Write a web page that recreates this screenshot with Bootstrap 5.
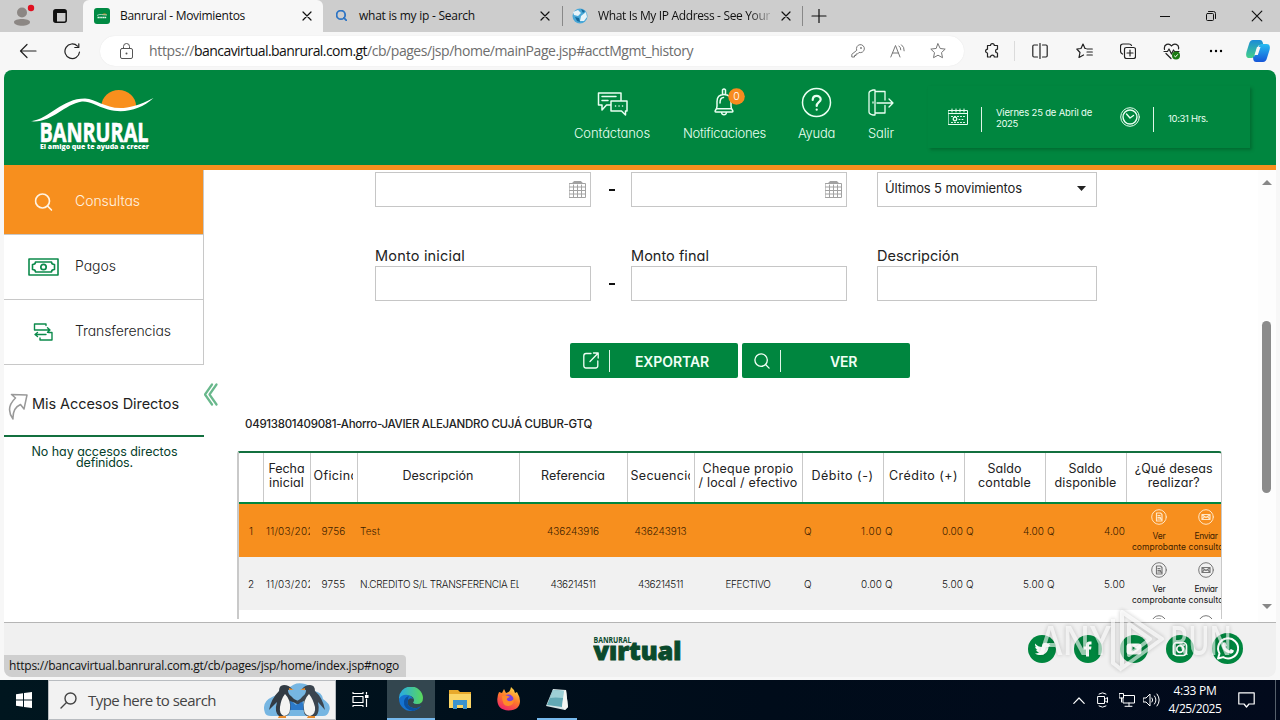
<!DOCTYPE html>
<html lang="es">

<head>
    <meta charset="UTF-8">
    <meta name="viewport" content="width=device-width, initial-scale=1.0">
    <title>Banrural - Movimientos</title>

    <!-- Bootstrap CSS -->
    <link href="https://cdn.jsdelivr.net/npm/bootstrap@5.3.0/dist/css/bootstrap.min.css" rel="stylesheet">

    <style>
        :root {
            --verde: #00863f;
            --verde-linea: #13703f;
            --naranja: #f78f1e;
        }

        body {
            width: 1280px;
            height: 720px;
            overflow: hidden;
            font-family: "Open Sans", "Noto Sans", sans-serif;
            font-size: 12px;
            line-height: 1.2;
            color: #222;
            background: #f7f7f7;
        }

        svg {
            display: block;
            flex: none;
        }

        .ln {
            fill: none;
            stroke: currentColor;
            stroke-linecap: round;
            stroke-linejoin: round;
        }

        [data-w] {
            display: inline-block;
            white-space: nowrap;
        }

        /* Browser window */
        .tab-strip {
            height: 32px;
            background: #cdcdcd;
            color: #111;
        }

        .strip-left {
            width: 83px;
            padding-left: 13px;
            gap: 18px;
        }

        .browser-tab {
            width: 239px;
            padding: 0 7px 0 10px;
        }

        .browser-tab.current {
            width: 240px;
            background: #f7f7f7;
            border-radius: 6px 6px 0 0;
            padding-left: 11px;
        }

        .tab-label {
            margin-left: 10px;
        }

        .tab-sep {
            width: 1px;
            height: 20px;
            background: #888;
        }

        .fade-end {
            -webkit-mask-image: linear-gradient(90deg, #000 88%, transparent 103%);
            mask-image: linear-gradient(90deg, #000 88%, transparent 103%);
        }

        .win-btn {
            width: 46px;
        }

        .toolbar {
            height: 38px;
            color: #222;
        }

        .nav-btns {
            width: 100px;
            padding-left: 19px;
            gap: 23px;
        }

        .url-pill {
            width: 864px;
            height: 30px;
            border-radius: 15px;
            background: #fff;
            padding: 0 6px 0 16px;
            box-shadow: 0 0 1px #ddd;
        }

        .url-text {
            margin-left: 16px;
            font-size: 14px;
            color: #6d6d6d;
        }

        .url-text b {
            font-weight: 400;
            color: #111;
        }

        .pill-ico {
            width: 40px;
            color: #777;
        }

        .bar-ico {
            width: 44px;
        }

        /* Page */
        .site {
            width: 1272px;
            height: 607px;
            margin: 0 4px 3px;
            border-radius: 8px;
            background: #fff;
            overflow: hidden;
            font-family: Inter, "Open Sans", sans-serif;
            font-feature-settings: "cv11";
        }

        .site-header {
            height: 100px;
            background: var(--verde);
            border-bottom: 5px solid var(--naranja);
            color: #e9fff2;
        }

        .brand-logo {
            margin: 16px 0 0 27px;
        }

        .head-item {
            font-size: 13px;
            font-weight: 300;
            padding-top: 16px;
        }

        .head-item svg {
            margin-bottom: 7px;
            overflow: visible;
        }

        .info-box {
            width: 322px;
            height: 62px;
            margin: 16px 26px 0 0;
            padding-left: 20px;
            font-size: 9.5px;
            line-height: 11px;
            box-shadow: 2px 2px 3px rgba(0, 60, 25, .35);
        }

        .v-sep {
            width: 1px;
            height: 25px;
            background: #dff5e8;
        }

        .site-main {
            height: 452px;
            overflow: hidden;
        }

        .side-menu {
            width: 200px;
        }

        .side-link {
            height: 65px;
            border-right: 1px solid #c8c8c8;
            border-bottom: 1px solid #c8c8c8;
            font-size: 14px;
            font-weight: 300;
        }

        .side-link svg {
            margin-left: 24px;
            margin-right: 16px;
        }

        .side-link span {
            margin-top: -2px;
        }

        .side-link.selected {
            background: var(--naranja);
            color: #fff3e3;
        }

        .side-title {
            height: 72px;
            border-bottom: 2px solid var(--verde-linea);
            font-size: 14.5px;
            padding: 8px 0 0 3px;
        }

        .side-note {
            padding: 9px 0 0 1px;
            font-size: 12.5px;
            line-height: 11px;
            color: #06402b;
        }

        .collapse-col {
            width: 33px;
            padding-top: 213px;
            color: #69b88c;
        }

        .work-area {
            width: 985px;
        }

        .filter-grid {
            display: grid;
            grid-template-columns: 216px 40px 216px 30px 220px;
            padding: 2px 0 0 138px;
        }

        .filter-field {
            height: 35px;
            border: 1px solid #c6c6c6;
            padding: 0 8px 0 7px;
        }

        .filter-label {
            height: 59px;
            padding-top: 40px;
            font-size: 14.5px;
        }

        .filter-dash {
            width: 6px;
            height: 2px;
            background: #111;
            margin-left: 2px;
        }

        .action-btn {
            width: 168px;
            height: 35px;
            border-radius: 2px;
            background: var(--verde);
            color: #f1fff6;
            font-size: 14px;
            font-weight: 600;
        }

        .action-btn .v-sep {
            height: 22px;
            margin-left: 10px;
        }

        .action-label {
            padding: 3px 4px 0 0;
        }

        .account-name {
            margin: 40px 0 0 8px;
            height: 33px;
            font-size: 11.5px;
            font-weight: 500;
        }

        .mov-box {
            height: 168px;
            overflow: hidden;
            border-left: 2px solid #c9c9c9;
            border-right: 1px solid #c9c9c9;
            border-top: 2px solid var(--verde-linea);
            border-radius: 3px 3px 0 0;
        }

        .mov-table {
            table-layout: fixed;
            width: 982px;
            font-size: 10px;
            font-weight: 300;
            line-height: 14px;
            color: #111;
        }

        .mov-table th,
        .mov-table td {
            padding: 0;
            overflow: hidden;
            white-space: nowrap;
            vertical-align: middle;
            background: transparent;
            color: inherit;
            box-shadow: none;
        }

        .mov-table th {
            height: 50px;
            font-size: 12.5px;
            font-weight: 400;
            color: #222;
            text-align: center;
            border-right: 1px solid #c9c9c9;
            border-bottom: 2px solid var(--verde);
            padding: 0 4px 3px;
        }

        .mov-table th:last-child {
            border-right: 0;
        }

        .mov-table td {
            height: 53px;
            text-align: center;
        }

        .mov-table .r-sel {
            background: var(--naranja);
            color: #3d1e00;
        }

        .mov-table .r-alt {
            background: #f1f1f1;
        }

        .mov-table .amount {
            padding: 0 1px 0 2px;
        }

        .act-cell {
            width: 110px;
            font-size: 8.5px;
            font-weight: 400;
            line-height: 11px;
            height: 53px;
            padding: 5px 0 0 5px;
        }

        .act-cell svg {
            margin-bottom: 6px;
            color: #777;
        }

        .r-sel .act-cell svg {
            color: #ffe6c5;
        }

        .scroll-col {
            width: 18px;
            margin-left: 36px;
            padding: 10px 1px 13px 0;
            background: #fdfdfd;
        }

        .scroll-up,
        .scroll-down {
            border: 5px solid transparent;
            border-top-width: 0;
            border-bottom: 5px solid #888;
        }

        .scroll-down {
            border-bottom-width: 0;
            border-top: 5px solid #888;
        }

        .scroll-thumb {
            width: 9px;
            height: 172px;
            border-radius: 5px;
            background: #8b8b8b;
            margin-top: 136px;
        }

        .site-footer {
            height: 55px;
            background: #f0f0f0;
            border-top: 1px solid #b5b5b5;
        }

        .socials {
            gap: 18px;
            padding: 10px 33px 0 0;
        }

        /* Overlays on the page */
        .status-tip {
            position: absolute;
            left: 4px;
            bottom: 43px;
            width: 402px;
            height: 22px;
            padding: 4px 0 0 5px;
            background: #cfcfcf;
            border-radius: 0 4px 0 8px;
            color: #111;
        }

        .stamp {
            position: absolute;
            left: 1036px;
            top: 606px;
            filter: drop-shadow(0 0 2px rgba(0, 0, 0, .35));
            opacity: .8;
        }

        /* Windows taskbar */
        .taskbar {
            height: 40px;
            background: linear-gradient(90deg, #00161f, #000c1a 60%, #020a1c);
            color: #fff;
        }

        .start-btn {
            width: 48px;
        }

        .search-box {
            width: 288px;
            background: #f2f2f2;
            border: 1px solid #b8bcc0;
            color: #444;
            font-size: 15px;
            padding-left: 11px;
        }

        .search-box .search-label {
            margin-left: 11px;
            margin-right: 47px;
        }

        .task-btn {
            width: 48px;
            border-bottom: 2px solid transparent;
        }

        .task-btn.active {
            background: #33464f;
            border-color: #76b9ed;
        }

        .running {
            width: 40px;
            height: 2px;
            background: #76b9ed;
            margin: 0 4px -2px;
        }

        .tray-ico {
            width: 24px;
        }

        .tray-clock {
            width: 64px;
            line-height: 18px;
        }
    </style>
</head>

<body class="d-flex flex-column">
    <!-- Shared icons -->
    <svg width="0" height="0" class="position-absolute">
        <symbol id="i-close" viewBox="0 0 10 10">
            <path class="ln" d="M1 1l8 8M9 1L1 9" />
        </symbol>
        <symbol id="i-lupa" viewBox="0 0 18 18">
            <circle class="ln" cx="8" cy="8" r="7" />
            <path class="ln" d="M13 13l4 4" />
        </symbol>
        <symbol id="i-cal" viewBox="0 0 17 17">
            <path class="ln" d="M.5 2.500h16v14H.5zM.5 6h16M.5 9.500h16M.5 13h16M4.500 4v12.500M8.500 4v12.500M12.500 4v12.500M4 1.500h9M5 .5h7" />
        </symbol>
        <symbol id="i-doc" viewBox="0 0 16 16">
            <circle class="ln" cx="8" cy="8" r="7.300" />
            <path class="ln" stroke-width="1.200" d="M5.500 4h4L11 5.500V12H5.500zM7 6.500h2M7 8.300h2.500M7 10h2" />
            <path class="ln" stroke-width="1.400" d="M9.500 9.500l1 1" />
        </symbol>
        <symbol id="i-mail" viewBox="0 0 16 16">
            <circle class="ln" cx="8" cy="8" r="7.300" />
            <path class="ln" stroke-width="1.200" d="M4 5.500h8v5H4zM4 5.700l4 2.800 4-2.800M4 10.300l2.500-2.600M12 10.300L9.500 7.700" />
        </symbol>
    </svg>

    <!-- Tab strip -->
    <div class="tab-strip d-flex align-items-center">
        <div class="strip-left d-flex align-items-center">
            <svg width="22" height="24" viewBox="0 0 22 24">
                <circle cx="9" cy="8.500" r="5" fill="#8c8784" />
                <path d="M1 18c0-4 16-4 16 0 0 5-16 5-16 0z" fill="#8c8784" />
                <circle cx="18" cy="4" r="3.200" fill="#e01020" />
            </svg>
            <svg width="14" height="14" viewBox="0 0 14 14">
                <rect class="ln" x=".8" y=".8" width="12.400" height="12.400" rx="2" stroke-width="1.500" />
                <path d="M1 1h12v3H1zM1 1h3v12H1z" fill="#111" />
            </svg>
        </div>
        <div class="browser-tab current d-flex align-items-center h-100">
            <svg width="16" height="16" viewBox="0 0 16 16">
                <rect width="16" height="16" rx="3" fill="#008a43" />
                <path d="M8 6.500a3 2.500 0 0 1 5 0z" fill="#f78f1e" />
                <path d="M3 7.500c3-2 5-.5 10-.500" stroke="#fff" stroke-width=".6" fill="none" />
                <path d="M3.500 9.500h9" stroke="#dff5e8" stroke-width="1.500" stroke-dasharray="1.500 .3" />
            </svg>
            <span class="tab-label"><span data-w="125">Banrural - Movimientos</span></span>
            <svg class="ms-auto me-1" width="10" height="10" stroke-width="1.200"><use href="#i-close" /></svg>
        </div>
        <div class="browser-tab d-flex align-items-center ps-3" style="padding-right:8px">
            <svg width="11" height="11" viewBox="0 0 18 18" style="color:#2d74c4;margin-left:-3px" stroke-width="3"><use href="#i-lupa" /></svg>
            <span class="tab-label" style="margin-left:12px"><span data-w="116">what is my ip - Search</span></span>
            <svg class="ms-auto me-1" width="10" height="10" stroke-width="1.200"><use href="#i-close" /></svg>
        </div>
        <div class="tab-sep"></div>
        <div class="browser-tab d-flex align-items-center" style="padding-left:9px">
            <svg width="16" height="16" viewBox="0 0 16 16">
                <circle cx="8" cy="8" r="7.500" fill="#4aa8d8" />
                <path d="M1 4l5-2 3 3-3 3-4-1zM9 8l5-4 1 5-3 4-4 0z" fill="#e8f4fa" />
                <path d="M3 9l4 1 1 4-3-1zM9 1l4 2-2 2z" fill="#156a9c" />
            </svg>
            <span class="tab-label fade-end"><span data-w="172">What Is My IP Address - See Your</span></span>
            <svg class="ms-auto me-1" width="10" height="10" stroke-width="1.200"><use href="#i-close" /></svg>
        </div>
        <div class="tab-sep"></div>
        <svg class="me-auto" style="margin-left:7px" width="18" height="14" viewBox="0 0 18 14"><path class="ln" stroke-width="1.200" d="M9 0v14M2 7h14" /></svg>
        <div class="win-btn d-flex justify-content-center"><svg width="10" height="10"><path class="ln" d="M0 5.500h10" /></svg></div>
        <div class="win-btn d-flex justify-content-center">
            <svg width="10" height="10" viewBox="0 0 10 10"><path class="ln" d="M2.500.500h5a2 2 0 0 1 2 2v5M1.500 2.500h5a1 1 0 0 1 1 1v5a1 1 0 0 1-1 1h-5a1 1 0 0 1-1-1v-5a1 1 0 0 1 1-1z" /></svg>
        </div>
        <div class="win-btn d-flex justify-content-center"><svg width="12" height="12"><use href="#i-close" /></svg></div>
    </div>

    <!-- Address bar -->
    <div class="toolbar d-flex align-items-center">
        <div class="nav-btns d-flex align-items-center">
            <svg width="18" height="16" viewBox="0 0 18 16"><path class="ln" stroke-width="1.200" d="M17 8H1.500M8 1.500L1.500 8 8 14.500" /></svg>
            <svg class="ms-1" width="17" height="17" viewBox="0 0 17 17"><path class="ln" stroke-width="1.200" d="M15.500 9a7.300 7.300 0 1 1-2-5.800M14.800.800v3.700h-4" /></svg>
        </div>
        <div class="url-pill d-flex align-items-center">
            <svg class="ms-1" width="13" height="16" viewBox="0 0 13 16" style="color:#555"><path class="ln" d="M2 5.500h9q1.500 0 1.500 1.500v7q0 1.500-1.500 1.500H2Q.5 15.500.5 14V7Q.5 5.500 2 5.500zM3.500 5.500V3.500a3 3 0 0 1 6 0v2" /><circle cx="6.500" cy="10.500" r="1" fill="#555" /></svg>
            <span class="url-text d-flex me-auto"><span data-w="45">https://</span><b data-w="173">bancavirtual.banrural.com.gt</b><span data-w="326">/cb/pages/jsp/home/mainPage.jsp#acctMgmt_history</span></span>
            <div class="pill-ico d-flex justify-content-center">
                <svg width="14" height="14" viewBox="0 0 14 14"><path class="ln" d="M5.600 6A4 4 0 1 1 8 8.400L6.500 10H5v1.500H3.500V13H.8v-2.300z" /><circle cx="10" cy="4" r=".9" fill="currentColor" /></svg>
            </div>
            <div class="pill-ico d-flex justify-content-center">
                <svg width="16" height="14" viewBox="0 0 16 14"><path class="ln" d="M.8 13L5.500 1.500 10 13M2.500 9h6M9 2q2 1.500 1.800 3.800M11.500.800q3 2.200 2.700 6" /></svg>
            </div>
            <div class="pill-ico d-flex justify-content-center">
                <svg width="16" height="16" viewBox="0 0 16 16"><path class="ln" d="M8 .8l2.200 4.700 5 .6-3.700 3.500 1 5.100L8 12.200l-4.500 2.500 1-5.100L.8 6.100l5-.6z" /></svg>
            </div>
        </div>
        <div class="bar-ico d-flex justify-content-center" style="margin-left:6px">
            <svg width="16" height="16" viewBox="0 0 16 16"><path class="ln" stroke-width="1.200" d="M3.500 2.500h3a1.900 1.900 0 0 1 3.800 0h3.200v3.700a1.900 1.900 0 0 0 0 3.800v4h-3.200a1.900 1.900 0 0 0-3.800 0h-3v-4a1.900 1.900 0 1 1 0-3.800z" /></svg>
        </div>
        <div class="tab-sep opacity-25"></div>
        <div class="bar-ico d-flex justify-content-center" style="margin-left:3px">
            <svg width="16" height="16" viewBox="0 0 16 16"><path class="ln" stroke-width="1.200" d="M5.500 2H2q-1.200 0-1.200 1.200v9.600Q.8 14 2 14h3.500M10.500 2H14q1.200 0 1.200 1.200v9.600Q15.200 14 14 14h-3.500M8 .5v15" /></svg>
        </div>
        <div class="bar-ico d-flex justify-content-center">
            <svg width="17" height="16" viewBox="0 0 17 16"><path class="ln" stroke-width="1.200" d="M10 5.500H9L7 1 5 5.500.8 6l3.200 3.500-1 5L7.500 12M11 6h5.300M11 9h5.300M11 12h5.300" /></svg>
        </div>
        <div class="bar-ico d-flex justify-content-center">
            <svg width="16" height="16" viewBox="0 0 16 16"><path class="ln" stroke-width="1.200" d="M6.500 4.500h7q2 0 2 2v7q0 2-2 2h-7q-2 0-2-2v-7q0-2 2-2zM10 7v6M7 10h6M2.500 11Q.5 10 .5 8V3.500Q.500 1 3 1h6q2 0 2.500 1.500" /></svg>
        </div>
        <div class="bar-ico d-flex justify-content-center">
            <svg width="18" height="17" viewBox="0 0 18 17"><path class="ln" stroke-width="1.200" d="M1.500 6.500C.5 1 6-.5 8.500 3c2.500-3.500 8-2 7 3M1 8.500h3.500L6 6l2.500 5L10.500 7l1 1.500H16M3 10.500l5 5" /><circle cx="13" cy="12.500" r="4" fill="#1a7a12" /><path d="M11.200 12.700l1.300 1.200 2.300-2.600" stroke="#fff" fill="none" /></svg>
        </div>
        <div class="bar-ico d-flex justify-content-center">
            <svg width="14" height="4" viewBox="0 0 14 4"><circle cx="2" cy="2" r="1.200" /><circle cx="7" cy="2" r="1.200" /><circle cx="12" cy="2" r="1.200" /></svg>
        </div>
        <svg width="24" height="22" viewBox="0 0 24 22" style="margin-left:8px">
            <defs>
                <linearGradient id="cop1" x2="0" y2="1"><stop stop-color="#1b8bd8" /><stop offset="1" stop-color="#43d08a" /></linearGradient>
                <linearGradient id="cop2" x2="0" y2="1"><stop stop-color="#28bdf2" /><stop offset="1" stop-color="#1656d8" /></linearGradient>
            </defs>
            <path d="M7 0h7q2 0 2.600 2l.8 3H14q-2 0-2.700 2.500L9 15q-.8 3-3.500 3H3.500Q-1 18 .5 12L3 4q1-4 4-4z" fill="url(#cop1)" />
            <path d="M17 22h-7q-2 0-2.600-2L7 17q2-.500 3-3.500L12.500 7Q13.300 4 16 4h4.500Q25 4 23.500 10L21 18q-1 4-4 4z" fill="url(#cop2)" />
            <path d="M11 7h3.500l-2.700 8H8.500z" fill="#f7f7f7" />
        </svg>
    </div>

    <!-- Bank site -->
    <div class="site d-flex flex-column">
        <header class="site-header d-flex align-items-start">
            <svg class="brand-logo" width="124" height="66" viewBox="31 86 124 66">
                <path d="M101.500 106a17.200 16 0 1 1 34.500 0q-16 6-34.500 0z" fill="#f98f1d" />
                <path d="M31 121.300C50 118.500 62 98.500 85 98.500c17 .5 27 21.500 68.500-.5C141 109.500 124 114 108 109.500 95 105.500 90 101 82 101.500 63 104.500 53 123 31 121.300z" fill="#fff" />
                <text x="39.500" y="141.500" font-family="Open Sans" font-weight="700" font-size="26" textLength="109" lengthAdjust="spacingAndGlyphs" fill="#fff" stroke="#fff" stroke-width=".6">BANRURAL</text>
                <text x="40" y="149" font-family="Open Sans" font-weight="800" font-size="7" textLength="109" lengthAdjust="spacingAndGlyphs" fill="#fff">El amigo que te ayuda a crecer</text>
            </svg>
            <nav class="d-flex ms-auto">
                <div class="head-item d-flex flex-column align-items-center">
                    <svg width="32" height="33" viewBox="-1 0 32 33"><path class="ln" stroke-width="1.500" d="M13 19h-3.500L5 24v-5H1.500V7H24v7M14 15h16v10h-1.500v4l-4-4H14zM5 10.500h14M5 14.500h6M18.500 20h.100M22 20h.100M25.500 20h.100" /></svg>
                    <span data-w="76">Contáctanos</span>
                </div>
                <div class="head-item d-flex flex-column align-items-center" style="margin-left:33px">
                    <svg width="32" height="33" viewBox="0 0 32 33"><path class="ln" stroke-width="1.500" d="M7 26q-1.500 0-.5-1.800 1.500-1.800 1.500-4.200v-4.500c0-5 2.500-7 7-7s7 2 7 7v4.500q0 2.400 1.500 4.200 1 1.800-.5 1.800zM13.500 8V4q1.500-2 3 0v4M12.500 26.500c.5 3 4.500 3 5 0M8 22.800h14M11 17c0-4 1-5.500 3.500-5.500" /><circle cx="27.500" cy="10.500" r="8.300" fill="#f78b1f" /><text x="27.500" y="14.300" text-anchor="middle" font-size="10.500" fill="#fff">0</text></svg>
                    <span data-w="83">Notificaciones</span>
                </div>
                <div class="head-item d-flex flex-column align-items-center" style="margin-left:32px">
                    <svg width="32" height="33" viewBox="0 0 32 33"><circle class="ln" cx="15.500" cy="16.500" r="14" stroke-width="1.500" /><path class="ln" stroke-width="2.200" d="M11.700 14c0-5.500 8-5 8-.8 0 3-4 3-4 6.800M15.700 23.500v.200" /></svg>
                    <span data-w="37">Ayuda</span>
                </div>
                <div class="head-item d-flex flex-column align-items-center" style="margin-left:30px">
                    <svg width="32" height="33" viewBox="0 0 32 33"><path class="ln" stroke-width="1.300" d="M4 7q0-2 4-3h2v25H8q-4-1-4-3zM10.500 5.500H20v8.500M20 19.500V27h-9.500M8 16v1M12 17h16M24 13l4 4-4 4" /></svg>
                    <span data-w="26">Salir</span>
                </div>
            </nav>
            <div class="info-box d-flex align-items-center" style="margin-left:31px">
                <svg width="20" height="18" viewBox="0 0 20 18" style="margin-top:-1px"><path class="ln" d="M.5 2.500h19v14H.5zM.5 5.500h19M4 1v3M8 1v3M12 1v3M16 1v3" /><path class="ln" stroke-dasharray="1 2" d="M3.500 8.500h13M11 11.500h6M3.500 14.500h13" /><circle class="ln" cx="7" cy="11" r="1.800" stroke-width="1.300" /></svg>
                <div class="v-sep" style="margin:4px 14px 0 13px"></div>
                <div style="width:124px;margin-top:2px"><span data-w="96">Viernes 25 de Abril de</span><br><span data-w="22">2025</span></div>
                <svg width="20" height="20" viewBox="0 0 20 20" style="margin-top:-1px"><circle class="ln" cx="10" cy="10" r="9.300" /><circle class="ln" cx="10" cy="10" r="7" stroke-width="1.400" /><path class="ln" stroke-width="1.400" d="M6.500 7L10 11l3.500-2.500" /></svg>
                <div class="v-sep" style="margin:4px 14px 0 13px"></div>
                <span data-w="40" style="margin-top:3px">10:31 Hrs.</span>
            </div>
        </header>

        <main class="site-main d-flex">
            <aside class="side-menu">
                <div class="side-link selected d-flex align-items-center">
                    <svg width="31" height="18" viewBox="-6.500 0 31 18" stroke-width="1.700"><use href="#i-lupa" width="18" height="18" /></svg>
                    <span data-w="65">Consultas</span>
                </div>
                <div class="side-link d-flex align-items-center">
                    <svg width="31" height="18" viewBox="0 0 31 18" style="color:#0c8a4b"><path class="ln" stroke-width="1.600" d="M1 1h29v16H1zM7.500 4h16q0 2.500 3 2.500v5q-3 0-3 2.500h-16q0-2.500-3-2.500v-5q3 0 3-2.500z" /><circle class="ln" cx="15.500" cy="9" r="2.700" stroke-width="1.700" /></svg>
                    <span data-w="41">Pagos</span>
                </div>
                <div class="side-link d-flex align-items-center">
                    <svg width="31" height="18" viewBox="0 0 31 18" style="color:#0c8a4b"><path class="ln" stroke-width="1.400" d="M18 2.500V1H6.500v6H22M19.500 4.800L22 7l-2.500 2.200M20.500 9.500h3.500V17H12v-2M18 11.500H7M9.500 9.500L7 11.500l2.500 2" /></svg>
                    <span data-w="96">Transferencias</span>
                </div>
                <div class="side-title d-flex align-items-center">
                    <svg width="22" height="28" viewBox="0 0 22 28" style="color:#999;margin-top:5px"><path class="ln" stroke-width="1.500" d="M4.500 1.500l15.500.500-3 14-3.500-4.500Q5.500 15 6 26-2 15 8.500 5z" /></svg>
                    <span class="ms-auto" style="margin-right:25px"><span data-w="147">Mis Accesos Directos</span></span>
                </div>
                <div class="side-note text-center"><span data-w="146">No hay accesos directos</span><br><span data-w="57">definidos.</span></div>
            </aside>

            <div class="collapse-col">
                <svg width="15" height="23" viewBox="1 0 15 23"><path class="ln" stroke-width="2.200" d="M9 1.500L2 11.500l7 10M13.500 1.500L6.500 11.500l7 10" /></svg>
            </div>

            <section class="work-area">
                <div class="filter-grid">
                    <div class="filter-field d-flex align-items-center justify-content-end pe-1"><svg width="17" height="17" style="color:#a2a2a2"><use href="#i-cal" /></svg></div>
                    <div class="d-flex align-items-center justify-content-center"><div class="filter-dash"></div></div>
                    <div class="filter-field d-flex align-items-center justify-content-end pe-1"><svg width="17" height="17" style="color:#a2a2a2"><use href="#i-cal" /></svg></div>
                    <div></div>
                    <div class="filter-field d-flex align-items-center justify-content-between" style="font-size:13px;padding-right:10px">
                        <span data-w="137" style="margin-top:-2px">Últimos 5 movimientos</span>
                        <svg width="9" height="5" style="margin-top:-2px"><path d="M0 0h9L4.500 5z" fill="#222" /></svg>
                    </div>
                    <div class="filter-label"><span data-w="90">Monto inicial</span></div>
                    <div></div>
                    <div class="filter-label"><span data-w="78">Monto final</span></div>
                    <div></div>
                    <div class="filter-label"><span data-w="82">Descripción</span></div>
                    <div class="filter-field"></div>
                    <div class="d-flex align-items-center justify-content-center"><div class="filter-dash"></div></div>
                    <div class="filter-field"></div>
                    <div></div>
                    <div class="filter-field"></div>
                </div>

                <div class="d-flex gap-1" style="margin:42px 0 0 333px">
                    <div class="action-btn d-flex align-items-center">
                        <svg style="margin-left:13px" width="16" height="17" viewBox="0 0 16 17"><path class="ln" stroke-width="1.300" d="M8 1.500H3Q.8 1.500.8 4v9.500Q.8 16 3 16h9.500q2.300 0 2.300-2.500V9M10.500 1h4.700v5M15 1.200L7 9.500" /></svg>
                        <div class="v-sep"></div>
                        <div class="action-label flex-fill text-center"><span data-w="74">EXPORTAR</span></div>
                    </div>
                    <div class="action-btn d-flex align-items-center">
                        <svg style="margin-left:12px" width="16" height="16" stroke-width="1.500"><use href="#i-lupa" /></svg>
                        <div class="v-sep"></div>
                        <div class="action-label flex-fill text-center"><span data-w="27">VER</span></div>
                    </div>
                </div>

                <div class="account-name"><span data-w="347">04913801409081-Ahorro-JAVIER ALEJANDRO CUJÁ CUBUR-GTQ</span></div>

                <div class="mov-box">
                    <table class="mov-table">
                        <colgroup>
                            <col style="width:24px"><col style="width:47px"><col style="width:47px"><col style="width:162px">
                            <col style="width:108px"><col style="width:67px"><col style="width:108px"><col style="width:81px">
                            <col style="width:81px"><col style="width:81px"><col style="width:81px"><col style="width:95px">
                        </colgroup>
                        <thead>
                            <tr>
                                <th></th>
                                <th><span data-w="36">Fecha</span><br><span data-w="35">inicial</span></th>
                                <th class="text-start ps-0"><div class="overflow-hidden" style="width:42px;padding-left:3px"><span data-w="45">Oficina</span></div></th>
                                <th><span data-w="71">Descripción</span></th>
                                <th><span data-w="64">Referencia</span></th>
                                <th class="text-start ps-0"><div class="overflow-hidden" style="width:62px;padding-left:3px"><span data-w="65">Secuencia</span></div></th>
                                <th class="px-0"><span data-w="91">Cheque propio</span><br><span data-w="99">/ local / efectivo</span></th>
                                <th><span data-w="62">Débito (-)</span></th>
                                <th><span data-w="69">Crédito (+)</span></th>
                                <th><span data-w="34">Saldo</span><br><span data-w="53">contable</span></th>
                                <th><span data-w="34">Saldo</span><br><span data-w="62">disponible</span></th>
                                <th><span data-w="78">¿Qué deseas</span><br><span data-w="52">realizar?</span></th>
                            </tr>
                        </thead>
                        <tbody id="movs"></tbody>
                    </table>
                </div>
            </section>

            <div class="scroll-col d-flex flex-column align-items-center">
                <div class="scroll-up"></div>
                <div class="scroll-thumb"></div>
                <div class="scroll-down mt-auto"></div>
            </div>
        </main>

        <footer class="site-footer d-flex align-items-start">
            <svg width="90" height="28" viewBox="593 635 90 28" style="margin:12px 0 0 589px">
                <text x="593.500" y="643" font-family="Open Sans" font-weight="700" font-size="8" textLength="38" lengthAdjust="spacingAndGlyphs" fill="#0a4a2c">BANRURAL</text>
                <text x="593.500" y="659.500" font-family="Open Sans" font-weight="800" font-size="24" textLength="88" lengthAdjust="spacingAndGlyphs" fill="#0a4a2c" stroke="#0a4a2c" stroke-width=".9">vırtual</text>
            </svg>
            <div class="socials d-flex ms-auto align-items-center">
                <svg width="28" height="28" viewBox="0 0 28 28"><circle cx="14" cy="14" r="14" fill="#00863f" /><path d="M7 8.500q3 3.500 7 3.500 0-4.500 4-4.200l2 1 2-.8-1 2 1.500 0-2 2c0 6-7 10.500-13.500 6.500q2.500 0 4-1.300-2.500-.500-3-2.500h1.500Q7 13.500 7 11.500l1.500.500Q6.500 10.500 7 8.500z" fill="#fff" /></svg>
                <svg width="28" height="28" viewBox="0 0 28 28"><circle cx="14" cy="14" r="14" fill="#00863f" /><path d="M12 21.500v-7H9.500v-3H12V10q0-3.500 3.500-3.500h2v3H16q-1 0-1 1v1h2.500l-.500 3h-2v7z" fill="#fff" /></svg>
                <svg width="28" height="28" viewBox="0 0 28 28"><circle cx="14" cy="14" r="14" fill="#00863f" /><rect x="6.500" y="8.500" width="15" height="11" rx="3" fill="#fff" /><path d="M12.500 11.500l4.500 2.500-4.500 2.500z" fill="#00863f" /></svg>
                <svg width="28" height="28" viewBox="0 0 28 28" style="color:#fff"><circle cx="14" cy="14" r="14" fill="#00863f" /><rect class="ln" x="7.500" y="7.500" width="13" height="13" rx="3.500" stroke-width="1.700" /><circle class="ln" cx="14" cy="14" r="3.300" stroke-width="1.700" /><circle cx="18" cy="10" r="1" fill="#fff" /></svg>
                <svg width="31" height="31" viewBox="0 0 31 31" style="color:#fff"><circle cx="15.500" cy="15.500" r="15.500" fill="#00863f" /><path class="ln" stroke-width="2" d="M6 25.500l1.500-5a10 10 0 1 1 3.700 3.600z" /><path d="M11.500 9.500l1.800-.2 1.500 3.200-1.200 1.500q1.400 2.600 3.800 3.600l1.500-1.500 3 1.500q-.5 3.500-3.800 3-7-1.600-8.100-7.600 0-2.300 1.500-3.500z" fill="#fff" /></svg>
            </div>
        </footer>
    </div>

    <!-- Taskbar -->
    <div class="taskbar d-flex align-items-stretch">
        <div class="start-btn d-flex align-items-center justify-content-center">
            <svg width="16" height="16" viewBox="0 0 16 16"><path d="M0 2.300L7 1.300V7.500H0zM8 1.100L16 0v7.500H8zM0 8.500h7v6.200l-7-1zM8 8.500h8V16l-8-1.100z" fill="#fff" /></svg>
        </div>
        <div class="search-box d-flex align-items-center">
            <svg width="17" height="17" viewBox="0 0 17 17"><path class="ln" stroke-width="1.400" d="M6.500 10.500L1 16" /><circle class="ln" cx="10.500" cy="6.500" r="5.500" stroke-width="1.400" /></svg>
            <span class="search-label"><span data-w="128">Type here to search</span></span>
            <svg width="68" height="37" viewBox="0 0 68 37">
                <path d="M2 31Q-2 20 9 15q6-3 16-8Q32-1 42 2q7 2 9 7 8 1 9 8 9 6 6 12-1 5-6 5H8q-5 0-6-3z" fill="#76b6e2" />
                <path d="M26 17l7 6 6-6 2 11H26z" fill="#2c79c9" />
                <path d="M16 9Q16 3 21 3q5 0 8 4l-4 1q0 4 3 6 3 4 7 5l2 2-2 1-8-3q2 15-5 15h-6q-5-4-2-14l-8 8Q8 17 16 9z" fill="#323b44" />
                <path d="M22 12q6 6 5 15 0 6-6 7-5-2-4-9 1-8 5-13z" fill="#f4f4f2" />
                <path d="M52 9Q52 3 47 3q-5 0-8 4l4 1q0 4-3 6-3 4-6 5l-2 2 2 1 7-3q-2 15 4 15h8q4-4 2-14l7 8q-2-12-10-19z" fill="#3b454f" />
                <path d="M46 12q-6 6-5 15 0 6 6 7 6-2 5-9-2-8-6-13z" fill="#f4f4f2" />
                <path d="M26 6l5 1.500-5 .8zM42 6l-5 1.500 5 .8zM16 34h7v2h-8zM45 34h7v2h-8z" fill="#e88a2a" />
            </svg>
        </div>
        <div class="task-btn d-flex align-items-center justify-content-center" style="width:51px;padding-right:3px">
            <svg width="17" height="15" viewBox="0 0 17 15"><path class="ln" stroke-width="1.200" d="M1 1V.5M11 1V.5M1 14v.500M11 14v.500M1 1.500h10M1 13.500h10M1 4.500h10v6H1zM14.500 0v2M14.500 7v8" /><rect x="13" y="3" width="3.500" height="3" fill="#fff" /></svg>
        </div>
        <div class="task-btn active d-flex align-items-center justify-content-center">
            <svg width="24" height="24" viewBox="0 0 24 24">
                <defs>
                    <linearGradient id="edg" x1="0" x2="1"><stop stop-color="#26a9e8" /><stop offset="1" stop-color="#5ad95a" /></linearGradient>
                </defs>
                <path d="M0 12A12 12 0 0 1 24 11q0 6-6 6-3 0-4-1.500 2-2 0-5Q10 6 0 12z" fill="url(#edg)" />
                <path d="M0 12Q3 7 9 8q4 1 5 4-3-2-5 1-2 6 5 8 4 1 8-2-4 5-10 5A12 12 0 0 1 0 12z" fill="#1573d0" />
                <path d="M9 13q-2 6 5 8 4 1 8-2-3 4-8 5Q4 22 5 14q1-4 5-5-1 1-1 4z" fill="#0b509e" />
            </svg>
        </div>
        <div class="task-btn d-flex align-items-center justify-content-center" style="width:49px">
            <svg width="22" height="19" viewBox="0 0 22 19"><path d="M0 0h9l2 2h11v16H0z" fill="#e8a92c" /><path d="M0 4h22v14H0z" fill="#fbd566" /><path d="M4 10h14v9h-4v-4H8v4H4z" fill="#3c93cf" /></svg>
        </div>
        <div class="task-btn d-flex align-items-center justify-content-center" style="width:49px">
            <svg width="23" height="24" viewBox="0 0 23 24">
                <defs>
                    <linearGradient id="ffx" x1=".8" y1="0" x2=".3" y2="1"><stop stop-color="#ffe04a" /><stop offset=".5" stop-color="#ff7a2a" /><stop offset="1" stop-color="#f0256a" /></linearGradient>
                </defs>
                <path d="M2 5l3 1 2-4 2 4q4 0 5-6 3 2 4 6l2-1q3 5 3 9 0 9-11.500 9.500Q0 23 .3 12 .5 8 2 5z" fill="url(#ffx)" />
                <circle cx="11.500" cy="12.500" r="5" fill="#7a3fe0" />
                <path d="M5 9q4-2 8 1-4 1-3 3 3 3 7-1 0 7-6 7T5 9z" fill="#ff8a2a" />
            </svg>
        </div>
        <div class="task-btn d-flex flex-column align-items-center">
            <svg class="my-auto" width="24" height="23" viewBox="0 0 24 23"><path d="M8 1l13 1 2 17-3 3L1 18z" fill="#d7e6e8" /><path d="M8 2l11 1-2 16-15-2z" fill="#62a9b5" /><path d="M8 2l11 1-1 7Q10 9 5 10z" fill="#9ed0d6" /><path d="M19 3l2-1 2 17-3 3-3-3z" fill="#f4f6f2" /></svg>
            <div class="running"></div>
        </div>

        <div class="ms-auto d-flex align-items-center">
            <div class="tray-ico d-flex justify-content-center"><svg width="12" height="7" viewBox="0 0 12 7"><path class="ln" stroke-width="1.200" d="M.8 6.300L6 1l5.200 5.300" /></svg></div>
            <div class="tray-ico d-flex justify-content-center"><svg width="12" height="16" viewBox="0 0 12 16"><path class="ln" d="M1 4.500h6.500v7H1zM7.500 7.500l3-2v5l-3-2M2 2q3.500-2.500 7 0M2 14q3.500 2.500 7 0" /></svg></div>
            <div class="tray-ico d-flex justify-content-center"><svg width="16" height="14" viewBox="0 0 16 14"><path class="ln" d="M5 2.500h10.500v7.500H4V5.500M10 10v3M6 13.300h7M.5.500h4V5h-4zM2.500 5v4" /></svg></div>
            <div class="tray-ico d-flex justify-content-center"><svg width="17" height="14" viewBox="0 0 17 14"><path class="ln" d="M.5 5h2.500l4-4v12L3 9H.5zM9 5q1.500 2 0 4M11.500 3q3 4 0 8M14 1q4.500 6 0 12" /></svg></div>
            <div class="tray-clock text-center"><span data-w="43">4:33 PM</span><br><span data-w="53">4/25/2025</span></div>
            <svg style="margin:0 20px 0 11px" width="17" height="16" viewBox="0 0 17 16"><path class="ln" stroke-width="1.200" d="M.8.800h15.400v11.200H11L8.500 15 6 12H.8z" /></svg>
            <div style="width:1px;height:40px;background:#56606b;margin-right:4px"></div>
        </div>
    </div>

    <div class="status-tip"><span data-w="390">https://bancavirtual.banrural.com.gt/cb/pages/jsp/home/index.jsp#nogo</span></div>

    <svg class="stamp" width="200" height="70" viewBox="1036 606 200 70">
        <text x="1039" y="655" font-family="Open Sans" font-weight="600" font-size="40" textLength="72" lengthAdjust="spacingAndGlyphs" fill="#fff" fill-opacity=".75">ANY</text>
        <text x="1170" y="655" font-family="Open Sans" font-weight="600" font-size="40" textLength="62" lengthAdjust="spacingAndGlyphs" fill="#fff" fill-opacity=".75">RUN</text>
        <path d="M1122 612v56l40-29zM1129 624l21 15-21 16zM1113 619v44l9 7" fill="none" stroke="#fff" stroke-opacity=".75" stroke-width="4" stroke-linejoin="round" />
    </svg>

    <script src="https://cdn.jsdelivr.net/npm/bootstrap@5.3.0/dist/js/bootstrap.bundle.min.js"></script>
    <script>
        const movs = [
            { n: 1, of: '9756', desc: 'Test', dw: 20, ref: '436243916', rw: 52, sec: '436243913', cheque: '', deb: '1.00', cred: '0.00', cont: '4.00', disp: '4.00', cls: 'r-sel' },
            { n: 2, of: '9755', desc: 'N.CREDITO S/L TRANSFERENCIA EL', dw: 161, ref: '436214511', rw: 45, sec: '436214511', cheque: 'EFECTIVO', deb: '0.00', cred: '5.00', cont: '5.00', disp: '5.00', cls: 'r-alt' },
            { cls: '' }
        ];

        const amount = v => `<td class="amount"><div class="d-flex justify-content-between"><span>Q</span><span data-w="21">${v}</span></div></td>`;

        const actions = full => `
            <td class="align-top"><div class="act-cell d-flex">
                <div class="text-center d-flex flex-column align-items-center" style="width:56px">
                    <svg width="16" height="16"><use href="#i-doc" /></svg>
                    ${full ? '<span data-w="13">Ver</span><span data-w="54">comprobante</span>' : ''}
                </div>
                <div class="text-center d-flex flex-column align-items-center" style="width:38px">
                    <svg width="16" height="16"><use href="#i-mail" /></svg>
                    ${full ? '<span data-w="23">Enviar</span><span data-w="35">consulta</span>' : ''}
                </div>
            </div></td>`;

        document.getElementById('movs').innerHTML = movs.map(m => m.n ? `
            <tr class="${m.cls}">
                <td>${m.n}</td>
                <td class="text-start"><div class="overflow-hidden" style="width:48px;padding-left:3px"><span data-w="54">11/03/2025</span></div></td>
                <td><span data-w="24">${m.of}</span></td>
                <td class="text-start" style="padding-left:3px"><span data-w="${m.dw}">${m.desc}</span></td>
                <td><span data-w="${m.rw}">${m.ref}</span></td>
                <td><span data-w="${m.rw}">${m.sec}</span></td>
                <td>${m.cheque ? `<span data-w="45">${m.cheque}</span>` : ''}</td>
                ${amount(m.deb)}${amount(m.cred)}${amount(m.cont)}${amount(m.disp)}
                ${actions(true)}
            </tr>` : `<tr><td colspan="11"></td>${actions(false)}</tr>`).join('');

        // Track each label out to its design width
        document.querySelectorAll('[data-w]').forEach(el => {
            const gap = (el.dataset.w - el.getBoundingClientRect().width) / el.textContent.length;
            el.style.letterSpacing = gap.toFixed(3) + 'px';
        });
    </script>
</body>

</html>
